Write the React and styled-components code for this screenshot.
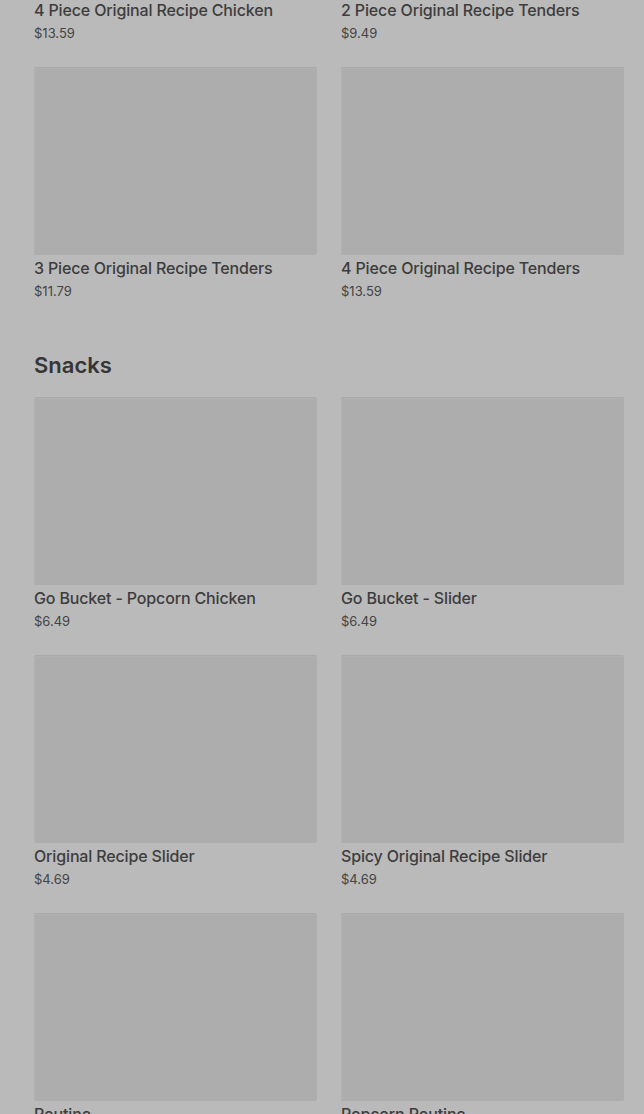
import React from "react";
import styled, { createGlobalStyle } from "styled-components";

const GlobalStyle = createGlobalStyle`
  html, body {
    margin: 0;
    padding: 0;
    background: #bababa;
    overflow: hidden;
  }
  body {
    font-family: Inter, Roboto, "Liberation Sans", sans-serif;
  }
`;

const categories = [
  {
    name: "Chicken",
    items: [
      { name: "4 Piece Original Recipe Chicken", price: "$13.59" },
      { name: "2 Piece Original Recipe Tenders", price: "$9.49" },
      { name: "3 Piece Original Recipe Tenders", price: "$11.79" },
      { name: "4 Piece Original Recipe Tenders", price: "$13.59" },
    ],
  },
  {
    name: "Snacks",
    items: [
      { name: "Go Bucket - Popcorn Chicken", price: "$6.49" },
      { name: "Go Bucket - Slider", price: "$6.49" },
      { name: "Original Recipe Slider", price: "$4.69" },
      { name: "Spicy Original Recipe Slider", price: "$4.69" },
      { name: "Poutine", price: "$4.99" },
      { name: "Popcorn Poutine", price: "$6.49" },
    ],
  },
];

const App = () => {
  return (
    <React.Fragment>
      <GlobalStyle />
      <Page>
        <Scroller>
          {categories.map((cat, i) => (
            <Section key={cat.name} first={i === 0}>
              {i > 0 && <Heading>{cat.name}</Heading>}
              <Grid>
                {cat.items.map((item) => (
                  <Card key={item.name}>
                    <Thumb />
                    <Name>{item.name}</Name>
                    <Price>{item.price}</Price>
                  </Card>
                ))}
              </Grid>
            </Section>
          ))}
        </Scroller>
      </Page>
    </React.Fragment>
  );
};

export default App;

const Page = styled.div`
  height: 1114px;
  overflow: hidden;
`;

// the list is scrolled: the first row of chicken cards sits above the fold
const Scroller = styled.div`
  margin-top: -191px;
  padding: 0 20px 0 34px;
`;

const Section = styled.section`
  padding-top: ${(p) => (p.first ? "0" : "50px")};
`;

const Heading = styled.h2`
  margin: 0 0 18px;
  font-size: 22px;
  line-height: 28px;
  font-weight: 600;
  color: #363636;
`;

const Grid = styled.div`
  display: grid;
  grid-template-columns: repeat(2, 283px);
  column-gap: 24px;
  row-gap: 24px;
`;

const Card = styled.div`
  display: flex;
  flex-direction: column;
`;

const Thumb = styled.div`
  height: 188px;
  border-radius: 2px;
  background: #adadad;
  border-top: 1px solid #a9a9a9;
  box-shadow: inset 1px 1px 0 #b1b1b1;
  box-sizing: border-box;
`;

const Name = styled.div`
  margin-top: 2px;
  font-size: 16px;
  line-height: 22px;
  font-weight: 500;
  letter-spacing: -0.15px;
  color: #3d3d3d;
  white-space: nowrap;
`;

const Price = styled.div`
  margin-top: 2px;
  font-size: 13px;
  line-height: 20px;
  color: #444444;
`;
